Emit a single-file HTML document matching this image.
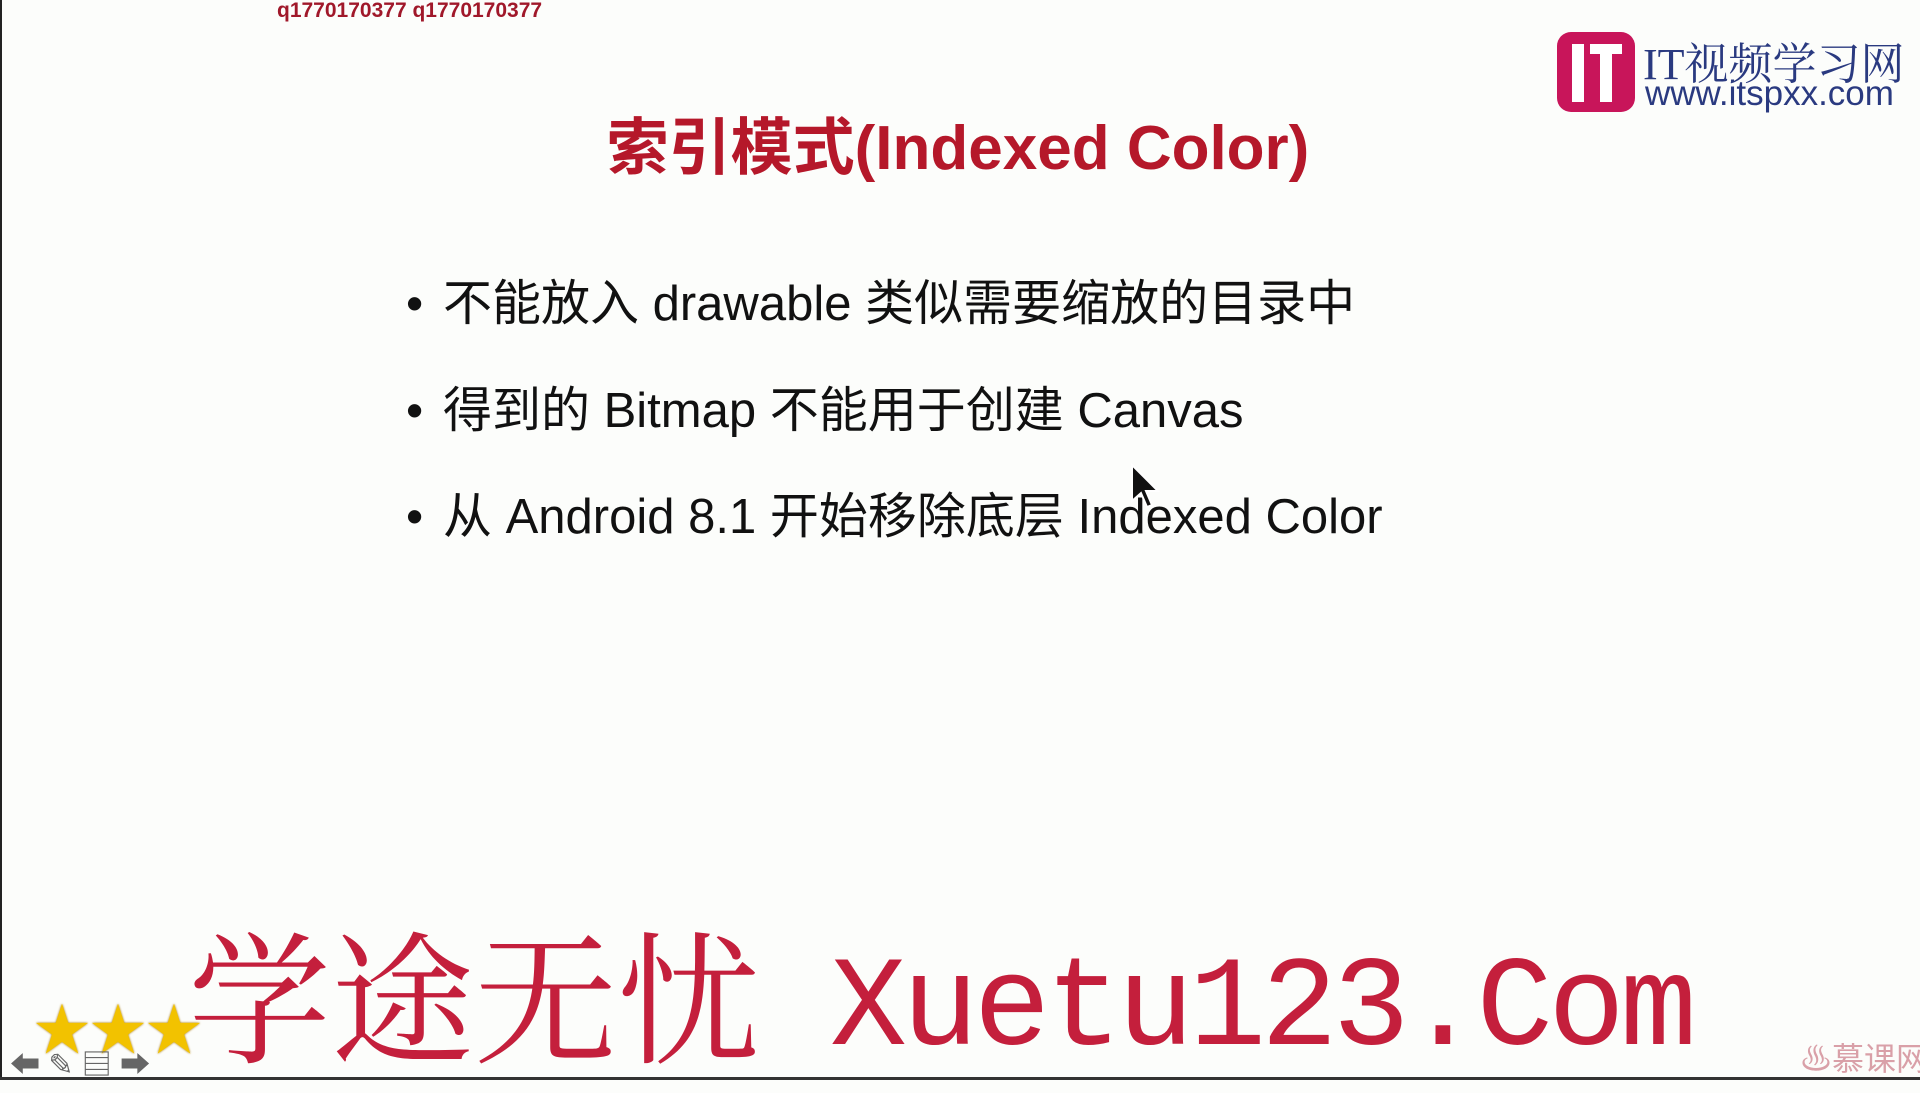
<!DOCTYPE html>
<html><head><meta charset="utf-8"><style>
body{margin:0;width:1920px;height:1080px;overflow:hidden;background:#fcfdfb;position:relative;font-family:"Liberation Sans","Noto Sans CJK SC",sans-serif}
.a{position:absolute;white-space:nowrap}
.b{font-size:49px;color:#111;left:406px}
.b span{display:inline-block;width:37px}
</style></head><body>
<div class="a" style="left:0;top:0;width:2px;height:1080px;background:#222"></div>
<div class="a" style="left:0;top:1077px;width:1920px;height:3px;background:#333"></div>
<div class="a" style="left:277px;top:-1px;font-size:21px;font-weight:bold;color:#a0182a">q1770170377 q1770170377</div>
<div class="a" style="left:0;width:1916px;text-align:center;top:97px;font-size:62px;font-weight:bold;color:#b5182a">索引模式(Indexed Color)</div>
<div class="a b" style="top:264px"><span>•</span>不能放入 drawable 类似需要缩放的目录中</div>
<div class="a b" style="top:371px"><span>•</span>得到的 Bitmap 不能用于创建 Canvas</div>
<div class="a b" style="top:477px"><span>•</span>从 Android 8.1 开始移除底层 Indexed Color</div>
<svg class="a" style="left:1130px;top:463px" width="30" height="50" viewBox="0 0 30 50"><path d="M2 2 L2 38 L11 30 L17 44 L22 42 L16 28 L28 28 Z" fill="#111" stroke="#fff" stroke-width="2"/></svg>
<div class="a" style="left:1557px;top:32px;width:78px;height:80px;border-radius:14px;background:#c8155a"></div>
<div class="a" style="left:1572px;top:44px;width:12px;height:58px;background:#fff"></div>
<div class="a" style="left:1590px;top:44px;width:32px;height:10px;background:#fff"></div>
<div class="a" style="left:1600px;top:44px;width:12px;height:58px;background:#fff"></div>
<div class="a" style="left:1643px;top:28px;font-size:44px;color:#2a3a80;font-family:'Liberation Serif','Noto Serif CJK SC',serif">IT视频学习网</div>
<div class="a" style="left:1645px;top:74px;font-size:35px;color:#2a3a80">www.itspxx.com</div>
<div class="a" style="left:188px;top:912px;font-size:143px;line-height:1.1;color:#c41f3c;font-family:'Noto Serif CJK SC',serif">学途无忧</div>
<div class="a" style="left:830px;top:938px;font-size:128px;color:#c41f3c;font-family:'Liberation Mono',monospace;letter-spacing:-5px">Xuetu123.Com</div>
<div class="a" style="left:34px;top:986px;font-size:56px;color:#f2c200;text-shadow:0 0 2px #a07000">★★★</div>
<div class="a" style="left:10px;top:1040px;font-size:30px;color:#666">⬅ ✎ ▤ ➡</div>
<div class="a" style="left:1800px;top:1034px;font-size:32px;color:#d9a0a8">♨慕课网</div>
</body></html>
